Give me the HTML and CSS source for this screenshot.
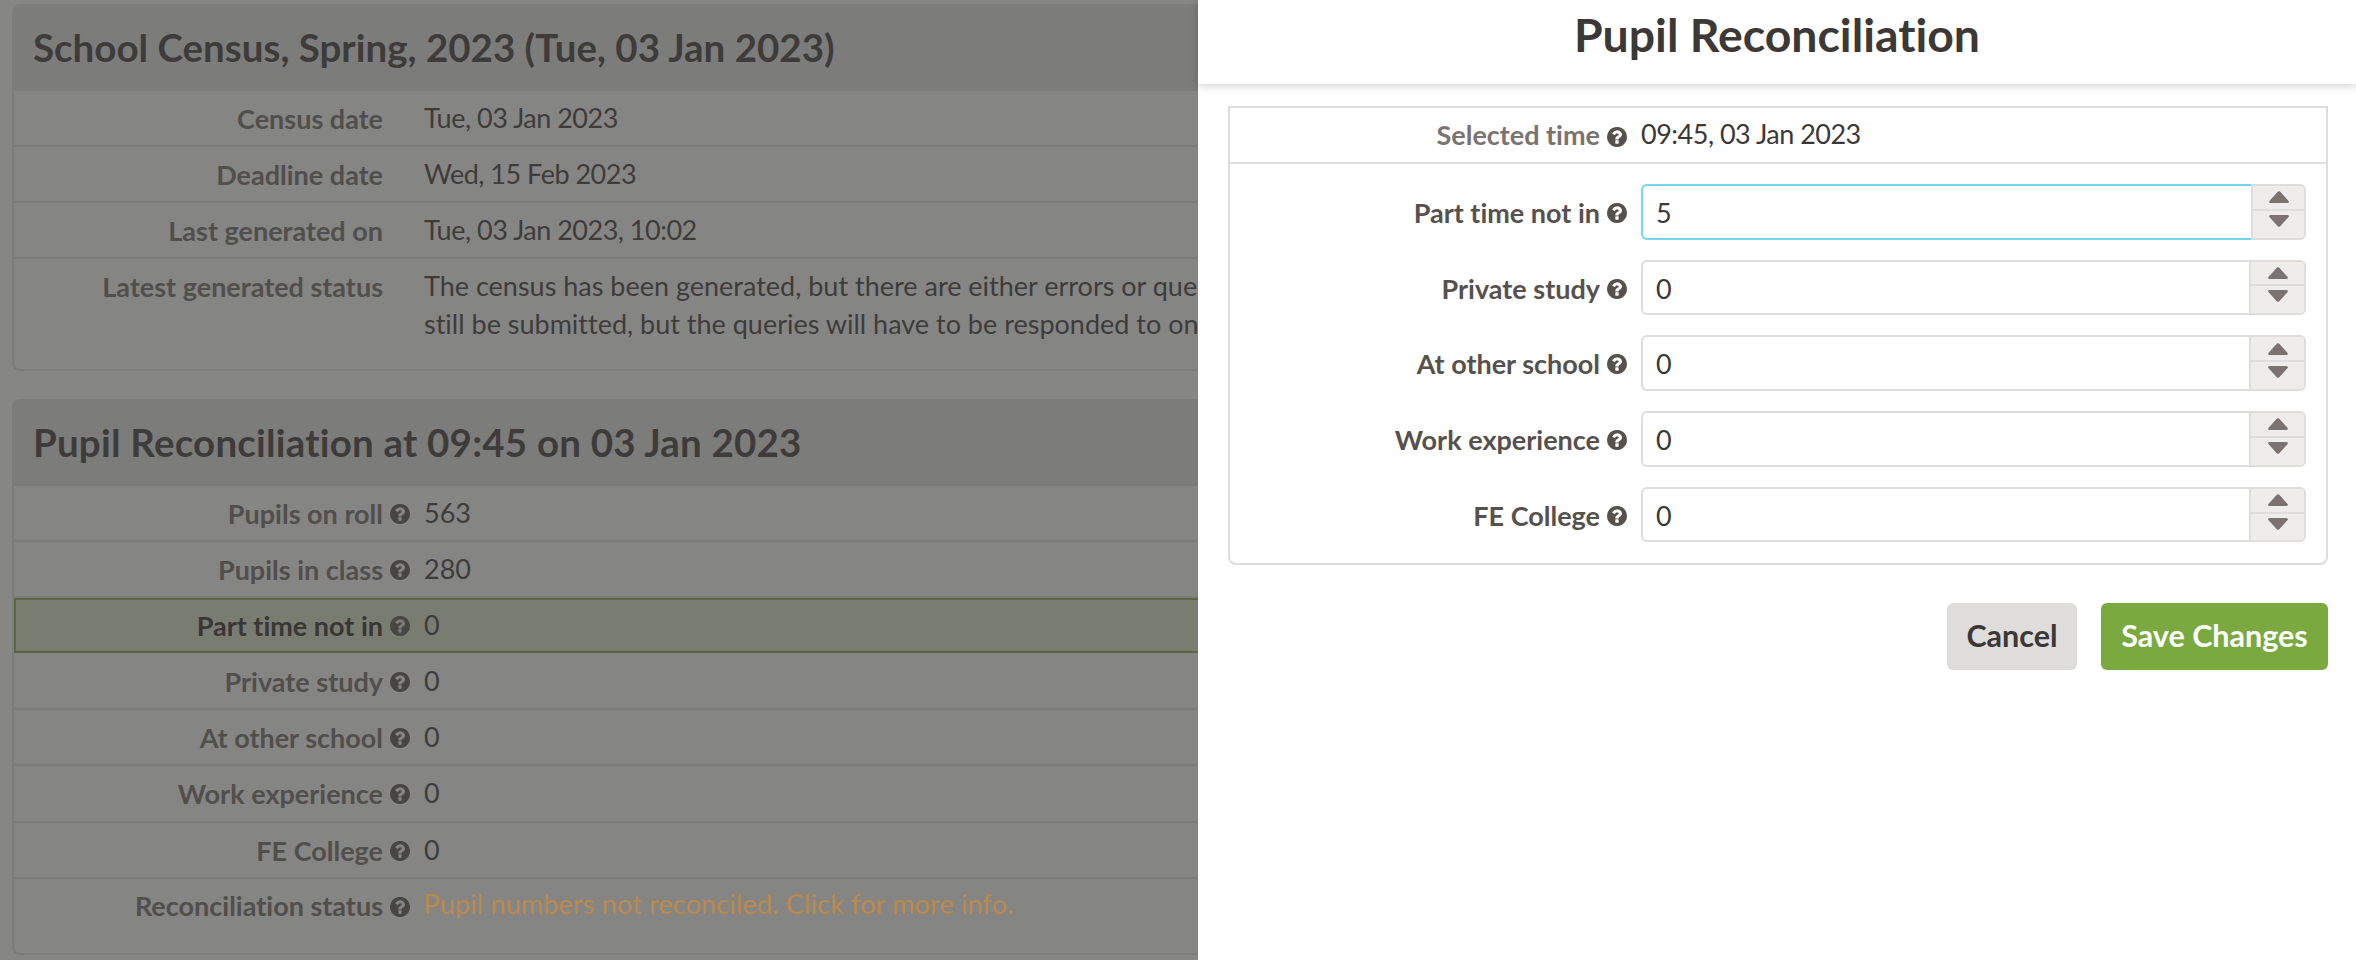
FILE: index.html
```html
<!DOCTYPE html>
<html lang="en">
<head>
<meta charset="utf-8">
<title>Pupil Reconciliation</title>
<link rel="stylesheet" href="styles.css">
</head>
<body>
<svg class="defs" width="0" height="0" aria-hidden="true">
  <symbol id="q" viewBox="0 128 1536 1536"><path fill="currentColor" d="M896 1376v-192q0-14-9-23t-23-9H672q-14 0-23 9t-9 23v192q0 14 9 23t23 9h192q14 0 23-9t9-23zm256-672q0-88-55.5-163T958 425t-170-41q-243 0-371 213-15 24 8 42l132 100q7 6 19 6 16 0 25-12 53-68 86-92 34-24 86-24 48 0 85.5 26t37.5 59q0 38-20 61t-68 45q-63 28-115.5 86.5T640 1020v36q0 14 9 23t23 9h192q14 0 23-9t9-23q0-19 21.5-49.5T972 957q32-18 49-28.5t46-35 44.5-48 28-60.5 12.5-81zm384 192q0 209-103 385.5T1153 1561t-385 103-385-103T103 1281 0 896t103-385.5T383 231 768 128t385 103 280 279.5T1536 896z"/></symbol>
  <symbol id="up" viewBox="0 0 20 12"><path fill="currentColor" d="M9 .6q1-.9 2 0L19.6 10q.6.9 0 1.6-.2.4-1 .4H1.4q-.8 0-1-.4-.6-.7 0-1.6z"/></symbol>
  <symbol id="down" viewBox="0 0 20 12"><path fill="currentColor" d="M9 11.4q1 .9 2 0L19.6 2q.6-.9 0-1.6-.2-.4-1-.4H1.4q-.8 0-1 .4-.6.7 0 1.6z"/></symbol>
</svg>

<main class="page">
  <section class="panel census">
    <h2 class="panel-title">School Census, Spring, 2023 (Tue, 03 Jan 2023)</h2>
    <div class="row"><span class="label">Census date</span><span class="gutter"></span><span class="value date">Tue, 03 Jan 2023</span></div>
    <div class="row"><span class="label">Deadline date</span><span class="gutter"></span><span class="value date">Wed, 15 Feb 2023</span></div>
    <div class="row"><span class="label">Last generated on</span><span class="gutter"></span><span class="value date">Tue, 03 Jan 2023, 10:02</span></div>
    <div class="row row-tall"><span class="label">Latest generated status</span><span class="gutter"></span><span class="value">The census has been generated, but there are either errors or queries<br>still be submitted, but the queries will have to be responded to on</span></div>
  </section>

  <section class="panel recon">
    <h2 class="panel-title">Pupil Reconciliation at 09:45 on 03 Jan 2023</h2>
    <div class="row"><span class="label">Pupils on roll</span><span class="gutter"><svg class="help"><use href="#q"/></svg></span><span class="value">563</span></div>
    <div class="row"><span class="label">Pupils in class</span><span class="gutter"><svg class="help"><use href="#q"/></svg></span><span class="value">280</span></div>
    <div class="row row-active"><span class="label">Part time not in</span><span class="gutter"><svg class="help"><use href="#q"/></svg></span><span class="value">0</span></div>
    <div class="row"><span class="label">Private study</span><span class="gutter"><svg class="help"><use href="#q"/></svg></span><span class="value">0</span></div>
    <div class="row"><span class="label">At other school</span><span class="gutter"><svg class="help"><use href="#q"/></svg></span><span class="value">0</span></div>
    <div class="row"><span class="label">Work experience</span><span class="gutter"><svg class="help"><use href="#q"/></svg></span><span class="value">0</span></div>
    <div class="row"><span class="label">FE College</span><span class="gutter"><svg class="help"><use href="#q"/></svg></span><span class="value">0</span></div>
    <div class="row row-status"><span class="label">Reconciliation status</span><span class="gutter"><svg class="help"><use href="#q"/></svg></span><span class="value status">Pupil numbers not reconciled. Click for more info.</span></div>
  </section>
</main>

<div class="overlay"></div>

<aside class="modal">
  <header class="modal-head"><h1 class="modal-title">Pupil Reconciliation</h1></header>
  <div class="modal-body">
    <form class="form-panel">
      <div class="form-top">
        <span class="flabel muted">Selected time</span>
        <span class="fgutter"><svg class="help"><use href="#q"/></svg></span>
        <span class="fvalue date">09:45, 03 Jan 2023</span>
      </div>
      <div class="fields">
        <div class="field"><span class="flabel">Part time not in</span><span class="fgutter"><svg class="help"><use href="#q"/></svg></span>
          <div class="spin focus"><span class="num">5</span><div class="arrows"><span class="arrow"><svg class="tri"><use href="#up"/></svg></span><span class="arrow"><svg class="tri"><use href="#down"/></svg></span></div></div></div>
        <div class="field"><span class="flabel">Private study</span><span class="fgutter"><svg class="help"><use href="#q"/></svg></span>
          <div class="spin"><span class="num">0</span><div class="arrows"><span class="arrow"><svg class="tri"><use href="#up"/></svg></span><span class="arrow"><svg class="tri"><use href="#down"/></svg></span></div></div></div>
        <div class="field"><span class="flabel">At other school</span><span class="fgutter"><svg class="help"><use href="#q"/></svg></span>
          <div class="spin"><span class="num">0</span><div class="arrows"><span class="arrow"><svg class="tri"><use href="#up"/></svg></span><span class="arrow"><svg class="tri"><use href="#down"/></svg></span></div></div></div>
        <div class="field"><span class="flabel">Work experience</span><span class="fgutter"><svg class="help"><use href="#q"/></svg></span>
          <div class="spin"><span class="num">0</span><div class="arrows"><span class="arrow"><svg class="tri"><use href="#up"/></svg></span><span class="arrow"><svg class="tri"><use href="#down"/></svg></span></div></div></div>
        <div class="field"><span class="flabel">FE College</span><span class="fgutter"><svg class="help"><use href="#q"/></svg></span>
          <div class="spin"><span class="num">0</span><div class="arrows"><span class="arrow"><svg class="tri"><use href="#up"/></svg></span><span class="arrow"><svg class="tri"><use href="#down"/></svg></span></div></div></div>
      </div>
    </form>
    <div class="actions">
      <button class="btn btn-cancel" type="button">Cancel</button>
      <button class="btn btn-save" type="button">Save Changes</button>
    </div>
  </div>
</aside>
</body>
</html>
```
FILE: styles.css
```css
* { box-sizing: border-box; }
html, body { margin: 0; height: 960px; overflow: hidden; background: #fff; }
body { font-family: Lato, "Noto Sans", sans-serif; font-size: 27px; color: #3c3836; font-variant-ligatures: none; }
.defs { position: absolute; }
.date { letter-spacing: -.5px; }

.page { width: 2340px; padding: 4px 0 0 12px; }
.panel { border: 2px solid #e3e3e1; border-radius: 8px; background: #fcfcfb; }
.census { height: 367px; margin-bottom: 28px; }
.recon { height: 556px; }
.panel-title { margin: 0; font-size: 38.5px; font-weight: 700; line-height: 48px; color: #3c3836; background: #e3e3e1; border-bottom: 2px solid #e0e0de; }
.census .panel-title { height: 85px; padding: 17px 19px 0; }
.recon .panel-title { height: 85px; padding: 17px 19px 0; letter-spacing: .2px; }

.row { display: grid; grid-template-columns: 369px 41px 1fr; height: 56.1px; border-bottom: 2px solid #e3e3e1; }
.row-tall { height: 112px; border-bottom: 0; }
.row-tall .value { padding-top: 8px; line-height: 38px; }
.row-status { border-bottom: 0; }
.row-status .label { padding-top: 9px; }
.row-status .value { padding-top: 6px; }
.row-active { height: 55px; margin-bottom: 1.1px; grid-template-columns: 367px 41px 1fr; background: #dce6ca; border: 2px solid #7fb04a; border-right: 0; }
.row-active .label { color: #2f2b29; padding-top: 8px; }
.row-active .gutter { padding-top: 16px; }
.row-active .value { padding-top: 6px; }
.label { padding-top: 10px; font-weight: 700; line-height: 36px; text-align: right; color: #6f6a66; }
.gutter { padding: 18px 0 0 7px; line-height: 0; }
.value { padding-top: 8px; line-height: 37.5px; white-space: nowrap; }
.status { position: relative; z-index: 2; color: #bd8a4d; letter-spacing: .15px; }
.help { width: 20px; height: 20px; color: #57514e; }

.overlay { position: fixed; inset: 0; background: rgba(64, 64, 62, .63); z-index: 1; }

.modal { position: fixed; top: 0; right: 0; bottom: 0; width: 1158px; background: #fff; z-index: 3; }
.modal-head { height: 84px; box-shadow: 0 2px 8px rgba(0, 0, 0, .18); }
.modal-title { margin: 0; padding-top: 7px; font-size: 46.4px; font-weight: 700; line-height: 54px; text-align: center; color: #3c3836; }
.modal-body { padding: 22px 28px 0 30px; }
.form-panel { height: 459px; border: 2px solid #dedddc; border-radius: 0 0 8px 8px; }
.form-top { display: grid; grid-template-columns: 370px 41px 1fr; height: 56px; border-bottom: 2px solid #dedddc; }
.flabel { padding-top: 9px; font-weight: 700; line-height: 36px; text-align: right; color: #57514e; }
.flabel.muted { color: #7a7370; }
.fgutter { padding: 19px 0 0 7px; line-height: 0; }
.fvalue { padding-top: 7px; line-height: 37px; }
.fields { display: flex; flex-direction: column; gap: 20.2px; padding: 20px 20px 0 0; }
.field { display: grid; grid-template-columns: 370px 41px 1fr; height: 55.5px; }
.field .flabel { padding-top: 11px; }
.field .fgutter { padding-top: 19px; }

.spin { display: flex; height: 55.5px; border: 2px solid #dedddc; border-radius: 6px; overflow: hidden; }
.num { flex: 1; padding: 3px 0 0 13px; line-height: 48px; }
.spin.focus { border: 0; overflow: visible; }
.spin.focus .num { border: 2px solid #75d5ef; border-right: 0; border-radius: 6px 0 0 6px; }
.spin.focus .arrows { border: 2px solid #dedddc; border-radius: 0 6px 6px 0; }
.arrows { display: flex; flex-direction: column; width: 55px; background: #eeedec; border-left: 2px solid #dedddc; }
.arrow { flex: 1; display: flex; align-items: center; justify-content: center; color: #7a7370; }
.arrow + .arrow { align-items: flex-start; padding-top: 4px; border-top: 2px solid #dedddc; }
.tri { width: 20px; height: 12px; }

.actions { display: flex; justify-content: flex-end; gap: 24px; margin: 38px 0 0 0; }
.btn { height: 67px; padding: 0 0 3px; border: 0; border-radius: 6px; font-family: inherit; font-size: 30.5px; font-weight: 700; font-variant-ligatures: none; }
.btn-cancel { width: 130px; background: #dedddc; color: #3c3836; }
.btn-save { width: 227px; background: #79a93f; color: #fff; }
```
